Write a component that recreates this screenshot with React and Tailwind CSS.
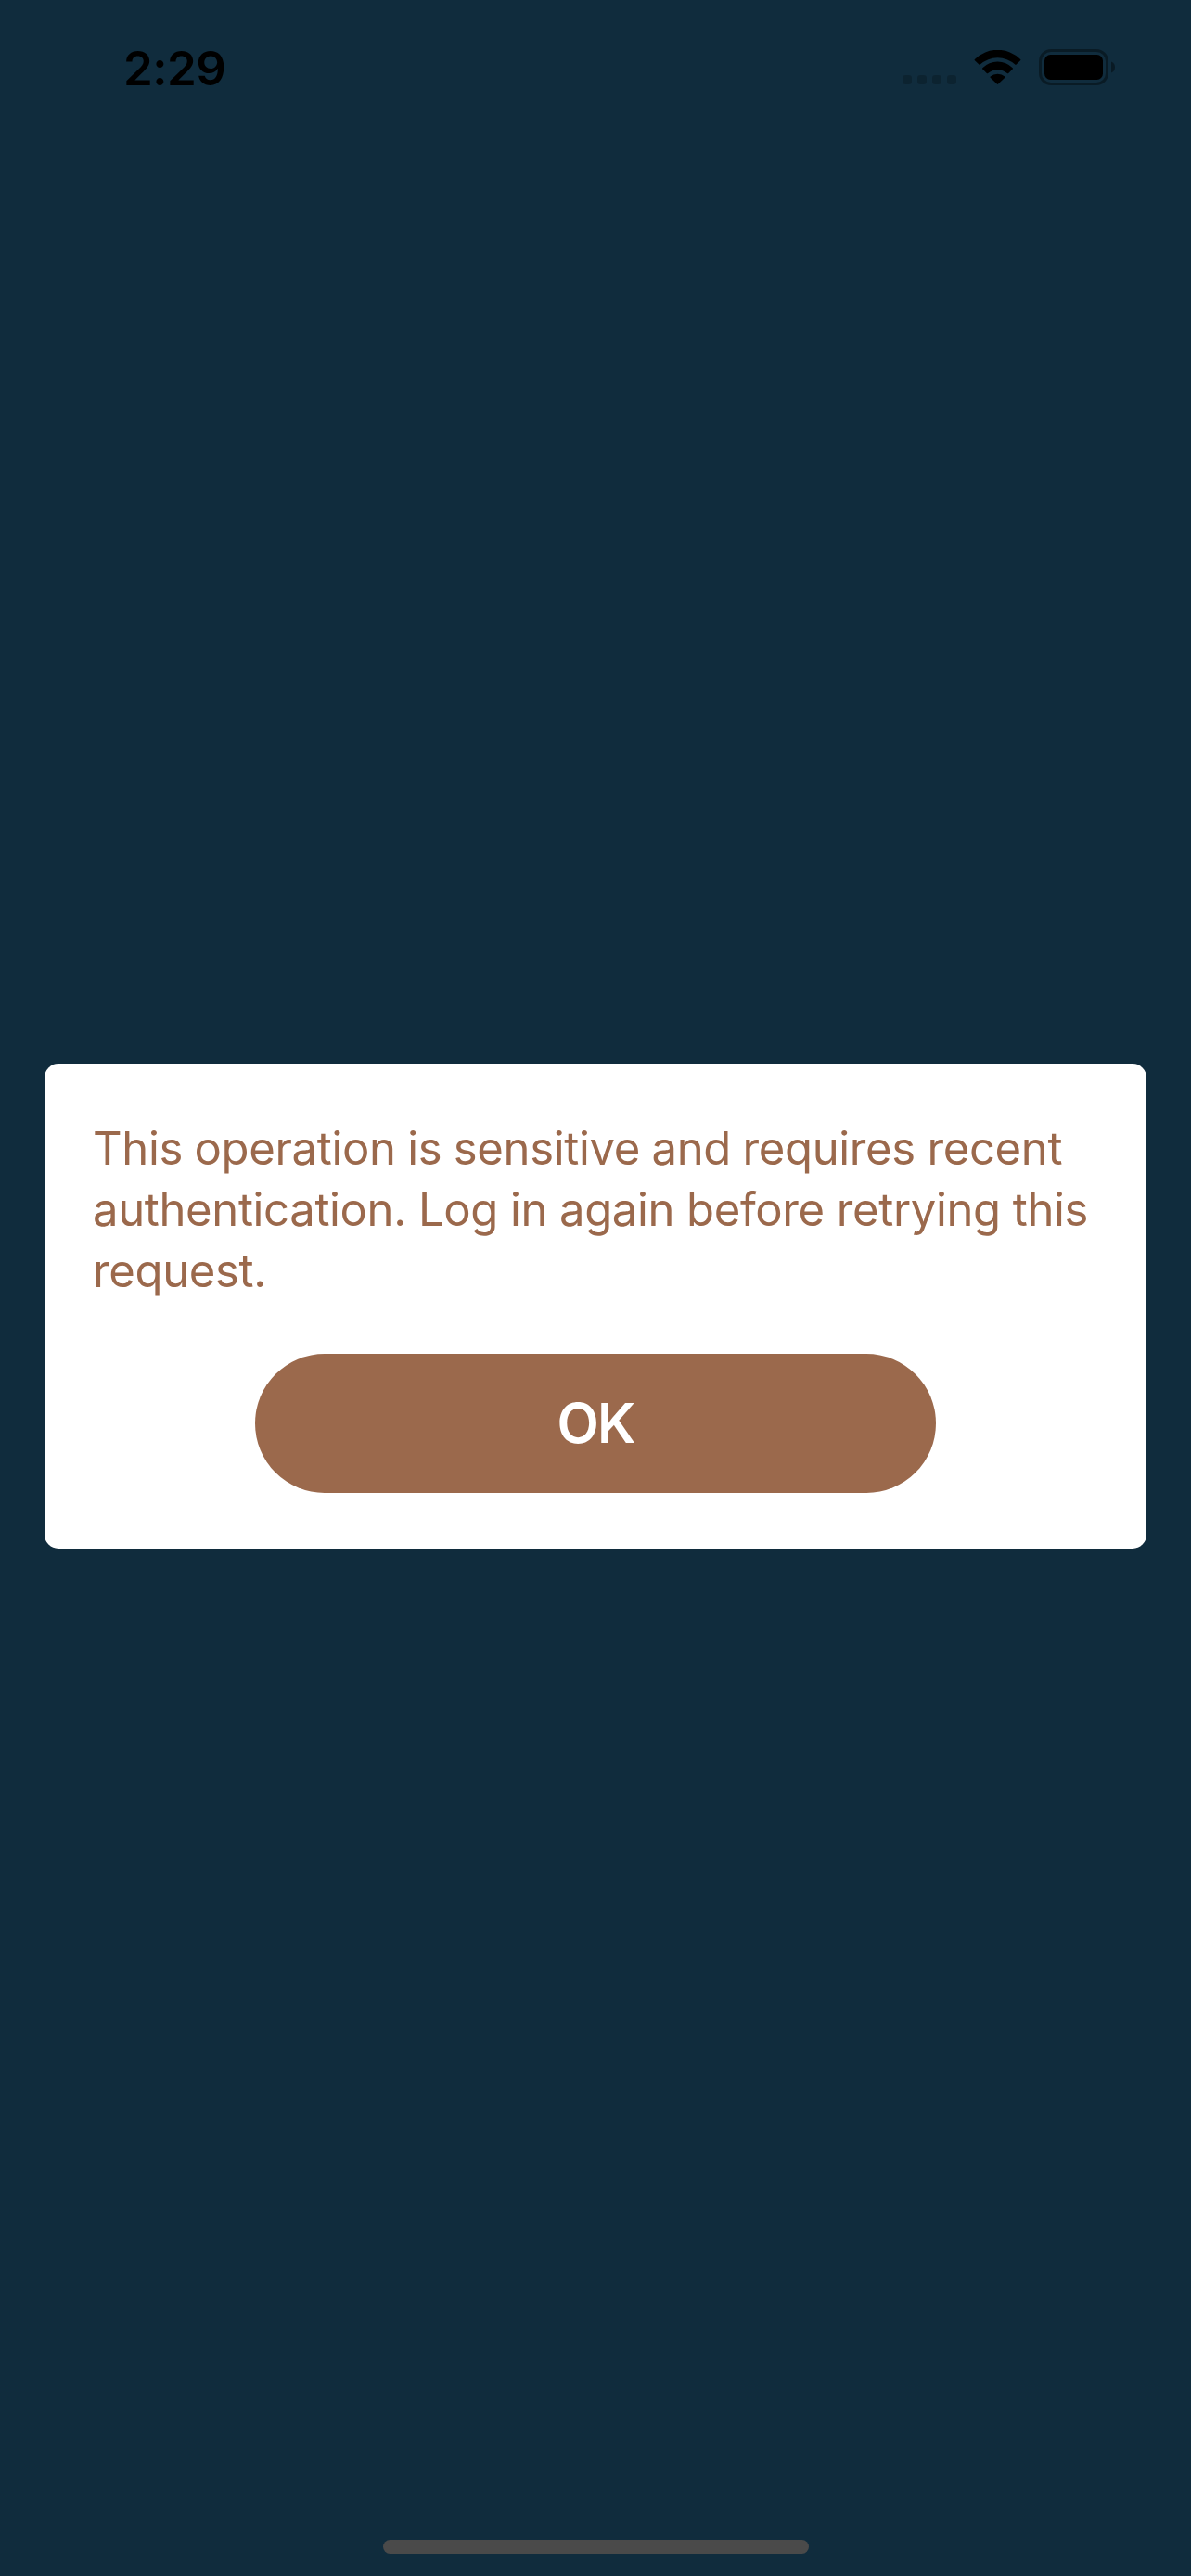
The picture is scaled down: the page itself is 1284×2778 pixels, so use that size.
function StatusBar() {
  return (
    <header className="flex h-[146px] items-start justify-between pt-[42px] pr-[82px] pl-[133px] text-black">
      <div className="text-[51px] leading-[63px] font-semibold tracking-[-0.5px]">2:29</div>
      <div className="flex pt-[11px]">
        <div className="mt-7 mr-[19px] flex gap-1.5">
          {[0, 1, 2, 3].map((dot) => (
            <span key={dot} className="size-2.5 rounded-[3px] bg-black/20" />
          ))}
        </div>
        <svg className="mt-px mr-[19px] h-[37px] w-[51px]" viewBox="0 0 51 37" fill="currentColor" aria-hidden="true">
          <path d="M0.9 9.9A35 35 0 0 1 50.1 9.9Q50.8 10.5 50.1 11.2L45.6 15.6Q45 16.2 44.3 15.6A27.8 27.8 0 0 0 6.7 15.6Q6 16.2 5.4 15.6L0.9 11.2Q0.2 10.5 0.9 9.9Z" />
          <path d="M9.3 19.3A22.8 22.8 0 0 1 41.7 19.3Q42.3 20 41.7 20.6L37.2 25Q36.6 25.5 35.9 25A16 16 0 0 0 15.1 25Q14.4 25.5 13.8 25L9.3 20.6Q8.7 20 9.3 19.3Z" />
          <path d="M17.7 28.6A12 12 0 0 1 33.3 28.6Q33.8 29.1 33.3 29.7L26.2 36.6Q25.5 37.2 24.8 36.6L17.7 29.7Q17.2 29.1 17.7 28.6Z" />
        </svg>
        <svg className="h-[39px] w-[82px]" viewBox="0 0 82 39" aria-hidden="true">
          <rect x="1.5" y="1.5" width="72" height="36" rx="11.5" fill="none" stroke="black" strokeOpacity="0.38" strokeWidth="3" />
          <rect x="6" y="6" width="63" height="27" rx="6.5" fill="black" />
          <path d="M78 13.5Q82 15.2 82 19.5Q82 23.8 78 25.5Z" fill="black" fillOpacity="0.4" />
        </svg>
      </div>
    </header>
  );
}

function AlertDialog() {
  return (
    <section role="alertdialog" className="mx-12 flex h-[523px] flex-col rounded-[15px] bg-white pt-[59px]">
      <p className="pl-[52px] text-[49px] leading-[66px] whitespace-nowrap text-[#9b694c]">
        <span className="block tracking-[-0.35px] [word-spacing:-0.8px]">This operation is sensitive and requires recent</span>
        <span className="block tracking-[-0.35px] [word-spacing:-0.5px]">authentication. Log in again before retrying this</span>
        <span className="block tracking-[-0.35px]">request.</span>
      </p>
      <button className="mt-14 ml-[227px] h-[150px] w-[734px] rounded-full bg-[#9b694c] text-[59px] leading-[70px] font-semibold tracking-[-2px] text-white">
        OK
      </button>
    </section>
  );
}

export default function App() {
  return (
    <div className="flex h-[2778px] w-[1284px] flex-col bg-[#102c3d] font-['Inter',sans-serif]">
      <StatusBar />
      <main className="flex-1 pt-[1001px]">
        <AlertDialog />
      </main>
      <div className="mb-6 ml-[413px] h-[15px] w-[459px] rounded-full bg-[#4a4a4a]" />
    </div>
  );
}
